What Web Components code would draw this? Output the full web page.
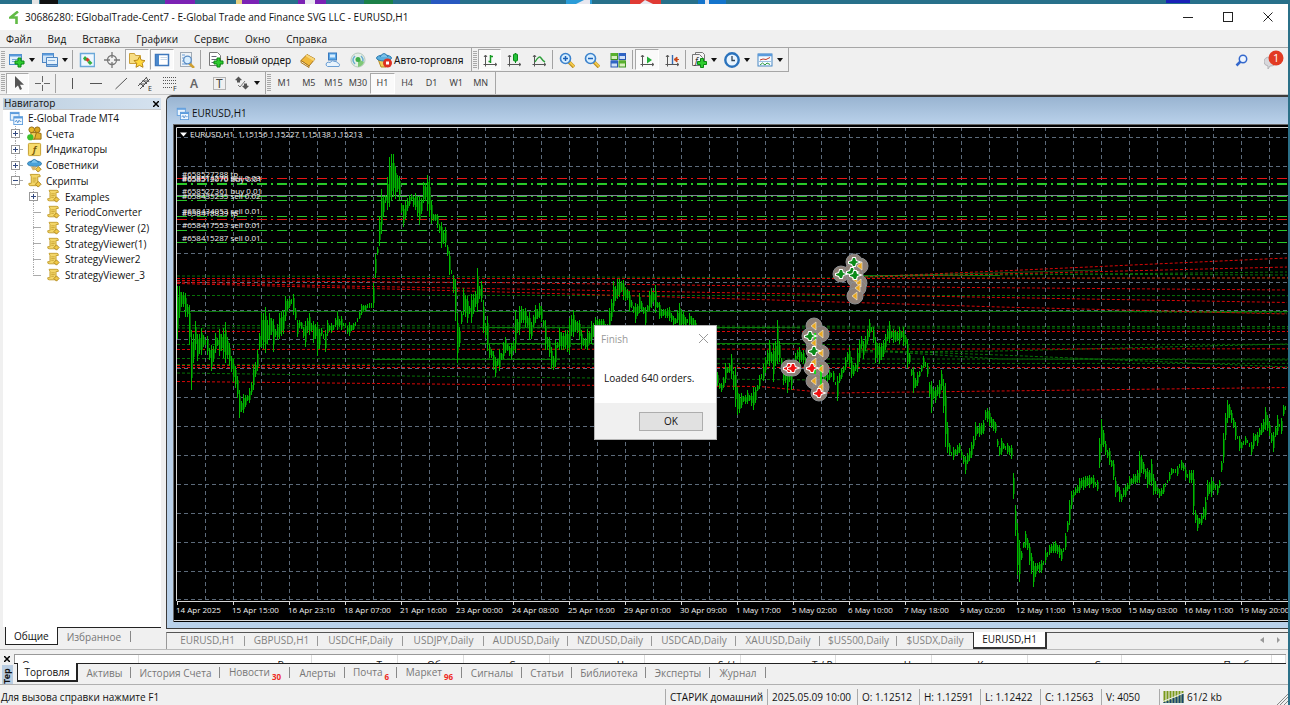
<!DOCTYPE html>
<html lang="ru">
<head>
<meta charset="utf-8">
<title>30686280: EGlobalTrade-Cent7 - EURUSD,H1</title>
<style>
html,body{margin:0;height:100%}
body{background:#2b7088;font:10px/16px "Open Sans","Noto Sans",sans-serif;color:#111;overflow:hidden}
</style>
</head>
<body>
<terminal-app></terminal-app>
<script>
const BASE = `*{box-sizing:border-box}button{font:inherit;color:inherit;background:none;border:0;padding:0;margin:0;cursor:default;white-space:nowrap}svg{display:block;flex:none}`;

function define(name, css, markup, after) {
  customElements.define(name, class extends HTMLElement {
    constructor() {
      super();
      this.attachShadow({mode: 'open'});
    }
    connectedCallback() {
      const html = typeof markup === 'function' ? markup(this) : markup;
      this.shadowRoot.innerHTML = `<style>${BASE}${css}</style>${html}`;
      if (after) after(this);
    }
  });
}

/* ---------- icons, 16x16 ---------- */
const plus = (x, y) => `<path d="M${x+3} ${y}h3v3h3v3h-3v3h-3v-3h-3v-3h3z" fill="#2ecc2e" stroke="#0a8a12"/>`;
const axes = `<path d="M3.5 3.5v11M1.5 12.5h13M2 5l1.500-2L5 5M13 11l2 1.500-2 1.500" fill="none" stroke="#555"/>`;
const scroll = `<path d="M3.5 1.5h9q2 0 1.5 2.5h-2.500v7l1 2.500h-9q-2 0-1.500-2.500h2.500v-7z" fill="#f3d668" stroke="#c19a28"/><path d="M6 5.5h4M6 7.5h4M6 9.5h3" stroke="#c9a436"/><path d="M12 9l3 3-3 3-3-3z" fill="#f0c846" stroke="#a8801c"/>`;
const charts = `<rect x="1.500" y="1.500" width="10" height="9" fill="#e6f2fd" stroke="#5b9bdc"/><path d="M1.500 2.500h10" stroke="#5b9bdc" stroke-width="2"/><rect x="5.500" y="6.500" width="10" height="9" fill="#eef7ff" stroke="#5b9bdc"/><path d="M5.500 7.500h10" stroke="#5b9bdc" stroke-width="2"/><path d="M7 12.500l1.500-2 1.500 3 1.500-3 1.500 2 1-1" fill="none" stroke="#4a88cc"/>`;
const lens = (s) => `<path d="M10 10l5 5" stroke="#b98b1c" stroke-width="3.500"/><path d="M10.500 10l4.500 4.500" stroke="#f3c94a" stroke-width="2"/><circle cx="6.500" cy="6.500" r="5" fill="#d9efff" stroke="#3c82cc" stroke-width="1.600"/><path d="${s}" stroke="#1c62b8" stroke-width="1.500"/>`;
const ICONS = {
  newchart: `<rect x=".5" y="2.5" width="12" height="10" fill="#e2f1fd" stroke="#4d8cc8"/><path d="M.5 3.500h12" stroke="#5b9bdc" stroke-width="2"/><path d="M3 7.500h6M3 9.500h4" stroke="#7aa9d6"/>${plus(6,6)}`,
  profiles: `<rect x=".5" y="1.500" width="11" height="9" fill="#cfe4f8" stroke="#4f86c2"/><path d="M.5 2.500h11" stroke="#5b9bdc" stroke-width="2"/><path d="M4.500 13.500v-8h11v8z" fill="#e4f1fc" stroke="#4f86c2"/><path d="M4.500 12.500h11v2h-11z" fill="#8fb9e4" stroke="#4f86c2"/><path d="M6 8.500h7" stroke="#8ab4de"/>`,
  market: `<rect x="1.500" y="1.500" width="14" height="13" fill="#eef7ff" stroke="#6aa8d8" stroke-width="1.500"/><path d="M6 4l3 3-3 2-2-2.500z" fill="#2fae3a"/><path d="M8.500 5.500l2.500 2.500-2.500 2-2-2z" fill="#d83a28"/><path d="M10.500 8l3 3-2.500 2-2.500-2.500z" fill="#36b040"/>`,
  cross: `<circle cx="8" cy="8" r="4.500" fill="none" stroke="#777" stroke-width="1.300"/><path d="M8 0v6M8 10v6M0 8h6M10 8h6" stroke="#777" stroke-width="1.300"/>`,
  navig: `<path d="M.5 1.500h5l1 2h5v8h-11z" fill="#f7dd84" stroke="#caa03a"/><path d="M10.500 4.500l1.800 3.600 3.700.5-2.700 2.700.7 4-3.500-1.900-3.500 1.900.7-4-2.700-2.700 3.700-.5z" fill="#ffd83c" stroke="#b98718"/>`,
  term: `<rect x="1.500" y="2.500" width="13" height="11" fill="#fff" stroke="#3f78bd" stroke-width="1.500"/><rect x="2" y="3" width="3" height="10" fill="#4a88cc"/><path d="M6.500 5.500h7M6.500 7.500h7" stroke="#c8d8ea"/>`,
  tester: `<rect x="1.500" y=".5" width="11" height="14" fill="#eef2f6" stroke="#a0aab4"/><path d="M3 3h3M3 6h4M3 9h3M3 12h5" stroke="#6aa0d8"/><path d="M10 11l5 5" stroke="#d0a030" stroke-width="2.500"/><circle cx="8.500" cy="8" r="3.800" fill="#d9efff" stroke="#5a8cc4" stroke-width="1.300"/>`,
  order: `<path d="M1.500.5h8l3 3v10h-11z" fill="#fff" stroke="#777"/><path d="M3.500 4.500h5M3.500 7.500h6M3.500 10.500h3" stroke="#667"/>${plus(6,6)}`,
  meta: `<path d="M1 8.500l6-6 8 4.500-6 7z" fill="#f0b93c" stroke="#a8741a"/><path d="M1 8.500l8 5.500v1.500l-8-5z" fill="#fff3d0" stroke="#a8741a"/><path d="M7 2.500l8 4.500-1.500 2-8-5z" fill="#f8d678"/>`,
  cloud: `<rect x="3.500" y="1" width="8" height="7" fill="#5aa8e8" stroke="#3a78bc"/><rect x="5" y="2.500" width="5" height="3" fill="#d4ecff"/><path d="M2.500 14.500q-2.500-1-1-3.500 1.500-1.500 3.500-.5 2-3 5-1 2-.5 2.500 1.500 3 .5 1.500 3.500z" fill="#e8f3fc" stroke="#6a9ed4"/>`,
  signal: `<circle cx="8" cy="8" r="7" fill="#e4efe6" stroke="#b6c8bc"/><path d="M5 4q-4 4 0 8M11 4q4 4 0 8" fill="none" stroke="#6aaed0" stroke-width="1.500"/><path d="M8 7v8q5-1 6-5" fill="#7fc877"/><circle cx="8" cy="7.500" r="2.500" fill="#3fae4a"/>`,
  auto: `<path d="M2 7h11l-3 8h-5z" fill="#f0cc58" stroke="#b98b24"/><ellipse cx="8" cy="6" rx="7.500" ry="3" fill="#5aaede" stroke="#2f7cb0"/><path d="M4 5q4-7 8 0" fill="#79c2ea" stroke="#2f7cb0"/><circle cx="11.500" cy="11" r="4.500" fill="#dc3022"/><rect x="10" y="9.500" width="3" height="3" fill="#fff"/>`,
  bars: `${axes}<path d="M8.500 3v8M8.500 9.500h-2M11 4.500h-3" stroke="#159a22" stroke-width="1.500" fill="none"/>`,
  candle: `${axes}<path d="M9.500 1v10" stroke="#0a8a18"/><rect x="7.500" y="2" width="4" height="7" rx="1" fill="#24c03a" stroke="#0a8a18"/>`,
  line: `${axes}<path d="M4 10q4-7 6-4t4 4" fill="none" stroke="#2fa03c" stroke-width="1.400"/>`,
  zin: lens('M4 6.500h5M6.500 4v5'), zout: lens('M4 6.500h5'),
  tile: `<rect x="1" y="1.500" width="6.500" height="6" fill="#d6eebc" stroke="#3d9122"/><path d="M1 2.500h6.500" stroke="#58b02c" stroke-width="3"/><rect x="9" y="1.500" width="6.500" height="6" fill="#cfe0f8" stroke="#2a58b0"/><path d="M9 2.500h6.500" stroke="#2f64c4" stroke-width="3"/><rect x="1" y="9" width="6.500" height="6" fill="#cfe0f8" stroke="#2a58b0"/><path d="M1 10h6.500" stroke="#2f64c4" stroke-width="3"/><rect x="9" y="9" width="6.500" height="6" fill="#d6eebc" stroke="#3d9122"/><path d="M9 10h6.500" stroke="#58b02c" stroke-width="3"/>`,
  scrollr: `${axes}<path d="M8 4.500l5 3.500-5 3.500z" fill="#24b038"/>`,
  shift: `${axes}<path d="M8.500 3v9" stroke="#346ab4" stroke-width="1.400"/><path d="M15 7.500h-3M13 5l-3 2.500 3 2.500z" fill="#c8481c" stroke="#c8481c"/>`,
  indic: `<path d="M4.500.5h7l2 2v9h-9z" fill="#f4f4f4" stroke="#777"/><path d="M1.500 2.500h7l3 3v8h-10z" fill="#f4f4f4" stroke="#777"/><text x="4" y="12" font-size="9" font-style="italic" fill="#333">f</text>${plus(6.5,6.5)}`,
  clock: `<circle cx="8" cy="8" r="6.700" fill="#e8f4ff" stroke="#2a72bc" stroke-width="2.400"/><path d="M8 4v4.500h3" fill="none" stroke="#345" stroke-width="1.300"/>`,
  templ: `<rect x="1" y="2" width="14" height="12" fill="#f4faff" stroke="#4a88c4"/><path d="M1 3h14" stroke="#5b9bdc" stroke-width="2.500"/><path d="M3 8l3-1 3 .5 4-2" stroke="#c43a2a" fill="none"/><path d="M1 9.500h14" stroke="#9cc0e0"/><path d="M3 13l2.500-2 2.500 2 2-2 3 1.500" stroke="#2c9a3c" fill="none"/>`,
  cursor: `<path d="M5 1v12l3-2.500 2 4.500 2-1-2-4.300h4z" fill="#555"/>`,
  xhair: `<path d="M8.500 1v6M8.500 10v6M1 8.500h6M10 8.500h6" stroke="#666"/>`,
  vline: `<path d="M8.500 3v11" stroke="#555"/>`,
  hline: `<path d="M2 8.500h12" stroke="#555"/>`,
  trend: `<path d="M2.500 14L14 3" stroke="#555"/>`,
  chan: `<path d="M1 11l9-9M3 14l10-10M3 8l4 4M6 5l4 4M9 2l3 5M2 9h6M5 6h6" stroke="#555" fill="none"/><text x="11" y="16" font-size="7" fill="#333">E</text>`,
  fibo: `<path d="M1 2.500h13M1 5.500h13M1 8.500h13M1 12.500h9" stroke="#555" stroke-dasharray="1 1"/><text x="11" y="16" font-size="7" fill="#333">F</text>`,
  texta: `<text x="4" y="13" font-size="12" font-weight="600" fill="#666">A</text>`,
  textt: `<rect x="2.500" y="2.500" width="12" height="12" fill="none" stroke="#777" stroke-dasharray="1 1"/><text x="5" y="13" font-size="12" fill="#444">T</text>`,
  arrows: `<path d="M1 5l3.500-3.500L8 5l-2 .5v2h-3v-2z" fill="#555"/><path d="M8 11l2-.5v-2h3v2l2 .5-3.500 3.500z" fill="#555"/><path d="M4 10l2 2 5-6" stroke="#777" fill="none"/>`,
  charts, scroll,
  people: `<circle cx="5" cy="4" r="3" fill="#e8b82c" stroke="#946c10"/><circle cx="11" cy="4" r="3" fill="#d8a420" stroke="#946c10"/><path d="M7 14v-6q4-2 8 0v6z" fill="#e0b02c" stroke="#946c10"/><path d="M4 7h6l-2 7h-3z" fill="#f0cc5c" stroke="#946c10"/><circle cx="3.500" cy="12" r="3.300" fill="#3cc02c"/>`,
  func: `<rect x="1.500" y="1.500" width="13" height="13" rx="1" fill="#f7dc6c" stroke="#c39c2c"/><text x="6" y="12" font-size="10" font-weight="bold" font-style="italic" fill="#7a5c10">f</text>`,
  hat: `<ellipse cx="8" cy="6" rx="7.500" ry="3" fill="#4aa2da" stroke="#2874a8"/><path d="M4 5q3.500-7 8 0" fill="#7cc4ee" stroke="#2874a8"/><path d="M4 9h6l-2 4h-2z" fill="#d8b46c"/><path d="M12 9l3 3-3 3-3-3z" fill="#f0c846" stroke="#a8801c"/>`,
};
const icon = (n, s = 16) => `<svg width="${s}" height="${s}" viewBox="0 0 16 16" aria-hidden="true">${ICONS[n]}</svg>`;

/* ---------- toolbars ---------- */
define('tool-button', `
:host{display:block;height:21px}
button{display:flex;align-items:center;width:100%;height:100%;padding:0 4px;gap:2px;border:1px solid transparent;font:10px/16px "Noto Sans",sans-serif;color:#111}
:host([plain]) button{justify-content:center;padding:0}
:host([drop]) button{padding:0 2px;gap:4px}
:host([pressed]) button{background:#fafafa;border-color:#a8a8a8 #fff #fff #a8a8a8}
:host([period]) button{font-size:9px;color:#444}
i{border:3px solid transparent;border-top:4px solid #111;border-bottom:0}`,
  (el) => `<button type="button" aria-label="${el.title || el.getAttribute('label') || el.getAttribute('icon')}">${el.hasAttribute('icon') ? icon(el.getAttribute('icon')) : ''}${el.getAttribute('label') || ''}${el.hasAttribute('drop') ? '<i></i>' : ''}</button>`);

define('tool-strip', `
:host{display:flex;align-items:center;border-right:1px solid #a6a6a6;padding:0 2px 0 0;gap:1px}
b{width:4px;height:18px;margin:0 0 0 1px;background:repeating-linear-gradient(#a8a8a8 0 1px,#f0f0f0 1px 2px)}`,
  '<b></b><slot></slot>');
define('tool-sep', ':host{display:block;width:1px;height:19px;margin:0 1px 0 0;background:#a2a2a2}', '');

const btn = (name, w = 24, extra = '') => `<tool-button icon="${name}" style="width:${w}px" ${extra.includes('drop') || extra.includes('label') ? '' : 'plain'} ${extra}></tool-button>`;

define('tool-bars', `
:host{display:block;border-top:1px solid #a6a6a6;background:#f0f0f0}
.row{display:flex;height:24px}
.row tool-strip{border-bottom:1px solid #a6a6a6}
.two{height:23px;border-bottom:1px solid #c4c4c4}
.two tool-strip{border-bottom:0}
.periods{display:grid;grid-template-columns:repeat(9,1fr);width:221px}
.lines{display:flex;justify-content:space-between;width:170px;margin-left:2px}
.end{margin-left:auto;display:flex;align-items:center;gap:16px;padding-right:4px}`,
`<div class="row">
<tool-strip>${btn('newchart',32,'drop')}${btn('profiles',32,'drop')}<tool-sep></tool-sep>${btn('market')}${btn('cross')}${btn('navig',24,'pressed')}${btn('term',24,'pressed')}${btn('tester')}<tool-sep></tool-sep>${btn('order',92,'label="Новый ордер"')}${btn('meta')}${btn('cloud')}${btn('signal')}${btn('auto',98,'label="Авто-торговля"')}</tool-strip>
<tool-strip>${btn('bars',23,'pressed')}${btn('candle')}${btn('line')}<tool-sep></tool-sep>${btn('zin')}${btn('zout')}${btn('tile',26)}<tool-sep></tool-sep>${btn('scrollr',24,'pressed')}${btn('shift')}<tool-sep></tool-sep>${btn('indic',32,'drop')}${btn('clock',32,'drop')}${btn('templ',32,'drop')}</tool-strip>
<div class="end">
<button type="button" aria-label="Поиск"><svg width="13" height="13" viewBox="0 0 13 13"><circle cx="8" cy="5" r="3.700" fill="#eef5ff" stroke="#3468cc" stroke-width="1.500"/><path d="M5.500 7.500L1.500 11.500" stroke="#3468cc" stroke-width="2.500"/></svg></button>
<button type="button" aria-label="Сообщения"><svg width="20" height="20" viewBox="0 0 20 20"><path d="M0 12q0-5 6-5t6 5q0 4-6 4l-2 3v-3q-4-1-4-4z" fill="#d8d8dc" stroke="#b4b4b8"/><circle cx="12" cy="8" r="7.500" fill="#e23a22"/><text x="9" y="12" font-size="11" fill="#fff">1</text></svg></button>
</div></div>
<div class="row two">
<tool-strip>${btn('cursor',23,'pressed')}${btn('xhair')}<tool-sep></tool-sep><div class="lines">${['vline','hline','trend','chan','fibo','texta','textt'].map(n => btn(n, 23)).join('')}</div>${btn('arrows',32,'drop')}</tool-strip>
<tool-strip><div class="periods">${['M1','M5','M15','M30','H1','H4','D1','W1','MN'].map(p => `<tool-button period plain label="${p}" ${p === 'H1' ? 'pressed' : ''}></tool-button>`).join('')}</div></tool-strip>
</div>`);

/* ---------- caption and menu ---------- */
define('title-bar', `
:host{display:block}
.desk{height:4px;background:#27708a;display:block;width:100%}
.bar{display:flex;align-items:center;height:26px;background:#fff;padding-left:9px}
h1{font:10px/16px "Open Sans",sans-serif;margin:0 0 0 6px;color:#111;white-space:nowrap}
.ctl{margin-left:auto;display:flex}
.ctl button{width:40px;height:26px;display:grid;place-items:center}`,
`<svg class="desk" height="4" aria-hidden="true"><path d="M32 0h7v4h-7z" fill="#e4e4e4"/><path d="M40 0h18v4h-18z" fill="#111"/><path d="M165 0h30v4h-30zM242 0h17v4h-17zM298 0h28v4h-28z" fill="#7b22b4"/><path d="M236 0h6v4h-6z" fill="#e4cf80"/><path d="M364 0h29v4h-29z" fill="#1c8048"/><path d="M431 0h29v4h-29z" fill="#2858c0"/><path d="M566 0h26v4h-26z" fill="#2a9cd8"/><path d="M630 0h31v4h-31z" fill="#e03a34"/><path d="M698 0h28v4h-28z" fill="#1474cc"/><path d="M576 4l8-4h6v4zM640 4l5-4 8 4zM305 0h10v4h-10zM705 0h4v4h-4z" fill="#e8e8f0"/><path d="M1166 0h24v3h-24z" fill="#1a22b8"/></svg>
<div class="bar"><svg width="10" height="13" viewBox="0 0 10 13"><path d="M9 .5L1.500 6.500H7.500V13" fill="none" stroke="#62bb46" stroke-width="2.600"/></svg>
<h1>30686280: EGlobalTrade-Cent7 - E-Global Trade and Finance SVG LLC - EURUSD,H1</h1>
<div class="ctl">
<button type="button" aria-label="Свернуть"><svg width="10" height="10"><path d="M0 5.500h10" stroke="#222"/></svg></button>
<button type="button" aria-label="Развернуть"><svg width="10" height="10"><rect x=".5" y=".5" width="9" height="9" fill="none" stroke="#222"/></svg></button>
<button type="button" aria-label="Закрыть"><svg width="10" height="10"><path d="M.5.5l9 9M9.500.5l-9 9" stroke="#222"/></svg></button></div></div>`);

define('menu-bar', `
:host{display:flex;height:17px;background:#f0f0f0;padding-left:6px;gap:16px}
button{line-height:16px}`,
  ['Файл','Вид','Вставка','Графики','Сервис','Окно','Справка'].map(t => `<button type="button">${t}</button>`).join(''));

/* ---------- navigator ---------- */
const box = (open) => `<svg width="9" height="9"><rect x=".5" y=".5" width="8" height="8" fill="#fff" stroke="#999"/><path d="M2 4.500h5${open ? '' : 'M4.500 2v5'}" stroke="#334a80"/></svg>`;
const leaf = (t, more) => `<li class="sub ${more ? 'more' : ''}"><span class="tw">${more ? box() : ''}</span>${icon('scroll', 14)}<span>${t}</span></li>`;
const branch = (t, i, open) => `<li class="top"><span class="tw">${box(open)}</span>${icon(i, 15)}<span>${t}</span></li>`;
define('nav-panel', `
:host{display:flex;flex-direction:column;width:161px;padding:3px 0 4px 3px;background:#f0f0f0}
header{display:flex;justify-content:space-between;align-items:center;height:11px;padding:0 2px 0 1px;background:linear-gradient(90deg,#bccfe0,#d5e2ef);font:10px/11px "Noto Sans",sans-serif;color:#222}
header button{line-height:10px}
main{flex:1;background:#fff;border-top:1px solid #c8c8c8;min-height:0}
ul{list-style:none;margin:0;padding:0;display:grid;grid-auto-rows:minmax(0,1fr);height:173px}
li{display:flex;align-items:center;white-space:nowrap}
.root{padding-left:6px;gap:5px}
.top{padding-left:8px;gap:4px}
.sub{padding-left:26px;gap:5px}
.tw{display:flex;align-items:center;width:12px;height:100%;background:linear-gradient(#aaa,#aaa) 4px 50%/10px 1px no-repeat,repeating-linear-gradient(#aaa 0 1px,#fff 1px 2px) 4px 0/1px 100% no-repeat}
li:last-child .tw{background-size:10px 1px,1px 50%}
footer{display:flex;height:18px;border-top:1px solid #222;margin-left:2px}
footer button{padding:0 9px;color:#777}
footer button[aria-selected=true]{color:#111;background:#fff;border:1px solid #222;border-top:0;margin-top:-1px;padding:0 8px}
footer i{width:1px;height:11px;background:#888;margin-top:3px}`,
`<header><span>Навигатор</span><button type="button" aria-label="Закрыть"><svg width="6" height="6"><path d="M0 0l6 6M6 0l-6 6" stroke="#000" stroke-width="1.500"/></svg></button></header>
<main><ul><li class="root">${icon('charts',14)}<span>E-Global Trade MT4</span></li>
${branch('Счета','people')}${branch('Индикаторы','func')}${branch('Советники','hat')}${branch('Скрипты','scroll',true)}
${leaf('Examples',true)}${['PeriodConverter','StrategyViewer (2)','StrategyViewer(1)','StrategyViewer2','StrategyViewer_3'].map(t => leaf(t)).join('')}</ul></main>
<footer role="tablist"><button role="tab" aria-selected="true" type="button">Общие</button><button role="tab" type="button">Избранное</button><i></i></footer>`);

/* ---------- price chart ---------- */
/* range samples: x, high, low, in thirds of a pixel from each block's origin */
const RANGES = [
 [165,100,'35 560 725 45 538 640 60 580 650 70 590 690 78 690 870 88 650 740 97 710 790 110 680 760 125 705 760 140 740 820 150 700 760 165 685 770 178 655 790 190 720 790 205 780 850 213 785 900 222 870 955 232 880 945 242 885 915 252 865 910 262 800 880 275 760 820 288 640 740 300 620 760 312 640 720 325 660 760 340 640 720 355 630 700 362 570 650 375 600 615 383 575 640 395 660 715 405 660 690 418 670 750 430 635 700 445 665 730 455 670 770 465 640 740 480 690 755 487 655 700 500 670 700 515 635 690 530 650 690 550 665 710 565 670 690 580 645 660 590 605 640 610 610 625 622 605 625 626 490 620 640 380 450 647 265 410 655 290 340 665 240 330 672 170 320 682 150 290 692 210 300 703 230 300 712 320 390 722 300 350 735 280 310 750 280 330 765 290 385 775 240 300 790 220 345 800 320 380 815 340 380 830 370 455 840 380 440 850 440 520 862 520 550 872 540 690 878 690 840 885 640 750 892 560 640 905 590 670 920 580 670 935 500 640 945 550 600'],
 [480,240,'5 120 190 12 160 370 20 220 330 30 310 370 45 350 410 60 320 390 75 290 340 95 310 360 105 210 340 120 195 270 135 205 260 150 220 310 165 195 250 175 185 230 185 200 250 195 240 330 205 280 340 215 330 400 225 300 380 235 260 330 250 280 330 265 240 350 278 210 290 295 230 290 305 280 335 320 270 330 335 240 310 345 230 270 385 240 280 390 150 260 400 120 210 415 115 170 430 120 180 445 150 210 465 190 250 480 150 210 495 200 260 510 140 200 525 135 220 540 200 240 565 195 240 580 230 260 600 180 270 615 230 260 630 215 260 645 240 280 660 270 330 690 340 420 712 400 440 720 415 470 735 370 430 752 340 410 765 380 500 772 450 530 785 460 500 800 450 490 820 440 510 835 410 450 850 370 420 865 300 370 880 310 430 890 230 370 900 330 380 910 380 440 920 370 460 935 380 450 945 340 380 955 320 370'],
 [760,240,'118 320 370 130 330 370 145 350 400 155 300 400 165 290 350 175 300 370 190 370 450 205 390 420 218 390 420 230 410 490 240 390 430 255 350 390 265 310 370 275 360 425 290 330 400 300 260 350 312 300 370 325 235 290 337 250 290 345 290 370 355 310 375 370 300 350 385 240 310 400 270 310 415 260 310 430 260 320 440 290 380 450 350 410 458 380 460 470 400 440 480 370 420 490 345 380 500 365 400 512 420 520 525 440 490 535 430 480 543 390 450 550 420 530 556 430 640 562 570 640 570 620 665 580 620 660 597 610 640 613 650 710 625 630 665 635 600 650 645 545 600 660 550 590 670 540 580 678 460 540 690 520 570 708 550 580 714 610 670'],
 [1000,240,'5 590 640 20 610 640 35 615 660 42 650 960 50 840 1000 58 910 1030 66 900 950 76 870 920 85 900 960 97 960 1050 107 970 1000 125 960 1000 135 930 970 150 910 940 168 900 940 185 930 965 195 880 930 205 790 870 215 745 790 235 715 760 250 710 750 265 705 745 280 705 745 292 720 755 298 570 670 304 530 630 313 600 640 325 620 670 338 650 710 345 710 770 360 750 790 375 735 770 390 700 740 410 700 730 418 625 730 430 670 700 440 690 745 451 640 730 460 710 770 478 750 775 490 730 760 505 700 730 515 680 700 530 680 710 540 650 690 555 680 720 565 690 730 576 690 730 579 690 825 585 810 850 593 830 880 605 820 850 615 770 840 622 710 770 635 710 770 650 735 765 660 690 750 668 590 680 675 520 600 682 475 540 690 500 550 705 545 600 720 600 640 738 585 610 755 610 650 760 570 620 770 580 620 780 550 590 795 500 570 805 540 580 820 580 640 832 520 580 842 540 590 850 490 520 862 480 500']];

function priceBars() {
  const pts = [];
  for (const [ox, oy, s] of RANGES) {
    const n = s.split(' ').map(Number);
    for (let i = 0; i < n.length; i += 3) pts.push([ox + n[i] / 3, oy + n[i+1] / 3, oy + n[i+2] / 3]);
  }
  let seed = 7, bright = '', dim = '', j = 0;
  const rnd = () => (seed = (seed * 16807) % 2147483647) / 2147483647;
  for (let x = 177; x < 1287; x += 2) {
    while (j < pts.length - 2 && pts[j+1][0] < x) j++;
    const a = pts[j], b = pts[j+1];
    const t = Math.min(1, Math.max(0, (x - a[0]) / (b[0] - a[0])));
    let hi = a[1] + (b[1] - a[1]) * t, lo = a[2] + (b[2] - a[2]) * t;
    const near = Math.min(t, 1 - t) * (b[0] - a[0]) < 1 ? 0 : 1;
    const r = (lo - hi) * .42 * near;
    hi = Math.round(hi + rnd() * r); lo = Math.round(Math.max(hi + 3, lo - rnd() * r));
    bright += `M${x}.5 ${hi}V${lo}`;
    const cut = Math.round((lo - hi) * .2);
    if (lo - hi > 5) dim += `M${x+1}.5 ${hi+cut}V${lo-cut}`;
  }
  return `<path d="${dim}" stroke="#006400"/><path d="${bright}" stroke="#00b800"/>`;
}

function chartSvg() {
  let grid = '', ticks = '';
  for (let x = 205; x < 2600; x += 28) grid += `M${x}.5 127V601`;
  for (let i = 0; i < 17; i++) grid += `M177 ${Math.round(137 + i * 28.9)}.5H2600`;
  const labels = ['14 Apr 2025','15 Apr 15:00','16 Apr 23:10','18 Apr 07:00','21 Apr 16:00','23 Apr 00:00','24 Apr 08:00','25 Apr 16:00','29 Apr 01:00','30 Apr 09:00','1 May 17:00','5 May 02:00','6 May 10:00','7 May 18:00','9 May 02:00','12 May 11:00','13 May 19:00','15 May 03:00','16 May 11:00','19 May 20:00'];
  labels.forEach((t, i) => { ticks += `M${177 + i * 56}.5 601v4`; });
  const level = (ys, c) => ys.map(y => `<path d="M177 ${y}.5H2600" stroke="${c}" stroke-dasharray="10 4 2 4"/>`).join('');
  const dash = (list, c) => list.map(d => `<polyline points="${d}" fill="none" stroke="${c}" stroke-dasharray="3 2"/>`).join('');
  const C = (x, y) => `<circle cx="${Math.round(760 + x / 3)}" cy="${Math.round(240 + y / 3)}" r="8" fill="#8f8178" stroke="#8c8f92"/>`;
  const T = (x, y) => `<path d="M${Math.round(757 + x / 3)} ${Math.round(240 + y / 3)}l5-4v8z" fill="#e8a820" stroke="#f4e4c8" stroke-width=".7"/>`;
  const P = (x, y, c) => `<path d="M${Math.round(760 + x / 3) - 1} ${Math.round(240 + y / 3) - 4}h2l1 3 3 1-3 1-1 3h-2l-1-2-3-1v-1l3-1z" fill="${c}" stroke="#fff" stroke-width="2" paint-order="stroke"/>`;
  const tri = [[300,77],[285,118],[297,130],[293,145],[285,168],[163,258],[183,283],[163,308],[182,338],[163,366],[183,388],[163,422],[183,440]];
  const gr = [[282,67],[244,103],[275,97],[286,104],[150,288],[162,332]], rd = [[155,385],[177,458],[86,385],[99,385]];
  const orders = [[177,'#658527288 tp'],[181,'#658514270 sell 0.03'],[182,'#658512070 buy 0.01'],[194,'#658527361 buy 0.01'],[199,'#658435235 sell 0.02'],[214,'#658434053 sell 0.01'],[216,'#658418839 tp'],[228,'#658417553 sell 0.01'],[241,'#658415287 sell 0.01']];
  return `<svg width="100%" height="100%" role="img" aria-label="EURUSD,H1"><g transform="translate(-174,-125)" stroke-width="1">
<path d="${grid}" stroke="#5c6a7a" stroke-dasharray="4 3" fill="none"/>
${level([183,196,200,216,230,242], '#28c828')}${level([184], '#28c828')}${level([178,219], '#e81414')}
<path d="M177 195.5H2600" stroke="#7c8790"/>
${dash(['177,276 600,277 860,278 2600,278','177,295.5 1094,295.5 2600,297','177,325.5 1094,326.5 2600,327','177,328 860,328 2600,329','177,344.5 860,344.5 2600,344','860,350 1000,355 1287,367','860,352 1000,351 1287,344','860,350 1000,359 1287,360','177,358.5 860,359 2600,359','177,364.5 860,363.5 2600,363','177,373 485,377 820,380','860,276 1000,275 1287,272','860,276 1000,274 1287,275','1094,311.5 1287,313'], '#087008')}
<path d="M177 311.5H1290M480 327.5H780M480 343.5H800M374 359.5H560M860 275.5H1000" stroke="#0a7a0a" fill="none"/>
${dash(['177,278.5 485,278.5 860,278.5 2600,276','177,280.5 485,282.5 720,285.5 1287,290','177,282 340,286 600,290.5 1287,302.5','177,283.5 485,291.5 740,299 1000,307 1287,314','860,277 1000,271 1287,258','860,277 1000,274 1287,267','177,331.5 760,331.5 2600,331.5','177,349.5 2600,348','177,367.5 2600,367.5','177,365.5 370,365.5','177,381.5 480,384.5 760,386.5 830,393 1000,391 1287,387.5'], '#d80808')}
${priceBars()}
<path d="M860 276.5L1100 270M800 327.5H776" stroke="#1e8a1e" opacity=".6"/>
${tri.concat(gr, rd).map(p => C(...p)).join('')}
<path d="M815 333v12M815 360v14M821 365v24" stroke="#18d818" stroke-width="2"/>
${tri.map(p => T(...p)).join('')}${gr.map(p => P(...p, '#0a8a18')).join('')}${rd.map(p => P(...p, '#f01010')).join('')}
<path d="M176.5 601V127.5H2600M177 601.5H2600M174 620.5H2600${ticks}" stroke="#d8d8d8" fill="none"/>
<path d="M180 132.5h7l-3.500 4z" fill="#fff"/>
<g font-size="8" fill="#f0f0f0"><text x="190" y="137">EURUSD,H1&#160; 1.15156 1.15227 1.15138 1.15213</text>
${orders.map(([y, t]) => `<text x="182" y="${y}">${t}</text>`).join('')}
${labels.map((t, i) => `<text x="${176 + i * 56}" y="613">${t}</text>`).join('')}</g></g></svg>`;
}
define('price-chart', `
:host{display:block;flex:1;min-height:0;min-width:0;background:#000;overflow:hidden}
svg{font-family:"Open Sans","Noto Sans",sans-serif;overflow:hidden}`, chartSvg);

define('chart-window', `
:host{display:flex;flex-direction:column;flex:1;min-height:0;border:solid #3c3c3c;border-width:2px 0 1px 1px;border-top-left-radius:6px;background:#b9d1ea;padding:0 0 6px 6px;overflow:hidden}
header{display:flex;align-items:center;gap:3px;height:27px;margin-left:-6px;padding:5px 0 0 9px;background:linear-gradient(#99b4d1,#b9d1ea)}
.client{display:flex;flex:1;min-height:0;border:solid #6a6a6a;border-width:1px 0 0 1px}`,
`<header>${icon('charts', 13)}<span>EURUSD,H1</span></header><div class="client"><price-chart></price-chart></div>`);

/* ---------- tab strips ---------- */
const TABS = [['EURUSD,H1',75],['GBPUSD,H1',73],['USDCHF,Daily',85],['USDJPY,Daily',81],['AUDUSD,Daily',84],['NZDUSD,Daily',84],['USDCAD,Daily',84],['XAUUSD,Daily',84],['$US500,Daily',77],['$USDX,Daily',76]];
define('chart-tabs', `
:host{display:flex;height:17px;margin-top:3px;padding-left:3px;border-top:1px solid #555;border-left:1px solid #999;background:#f0f0f0;color:#808080}
button{height:15px;line-height:15px;background:linear-gradient(#999,#999) 100% 3px/1px 10px no-repeat}
button:nth-last-of-type(2){background:none}
button[aria-selected=true]{width:74px;height:17px;margin-top:-1px;background:#fff;color:#111;border:1px solid #333;border-top:0;border-width:0 2px 2px 1px}
.nav{margin-left:auto;padding:4px 8px 0 0}`,
  TABS.map(([t, w]) => `<button type="button" role="tab" style="width:${w}px">${t}</button>`).join('') +
  `<button type="button" role="tab" aria-selected="true">EURUSD,H1</button><svg class="nav" width="28" height="12"><path d="M4 0v6l-4-3zM17 0v6l3-3z" fill="#999"/></svg>`);

const PAGES = [['Активы',53],['История Счета',89],['Новости',70,'30'],['Алерты',55],['Почта',52,'6'],['Маркет',65,'96'],['Сигналы',60],['Статьи',50],['Библиотека',74],['Эксперты',64],['Журнал',56]];
const COLS = [['Ордер',123],['Время',173],['Тип',86],['Объем',66],['Символ',86],['Цена',95],['S / L',96],['T / P',95],['Цена',96],['Комиссия',96],['Своп',94],['Прибыль',150]];
define('term-panel', `
:host{display:flex;height:36px;background:#f0f0f0;border-top:1px solid #bbb;border-bottom:1px solid #b0b0b0;padding-right:2px}
aside{width:14px;display:flex;flex-direction:column;align-items:center;gap:3px;padding-top:6px}
aside span{writing-mode:vertical-rl;transform:rotate(180deg);background:#b9cde2;font:bold 9px/10px "Noto Sans",sans-serif;height:20px;width:11px;overflow:hidden}
section{flex:1;min-width:0;margin-top:4px}
.head{height:9px;overflow:hidden;background:#fff;border:solid #999;border-width:1px 0 0 1px}
table{border-collapse:collapse;table-layout:fixed;width:100%}
th{font-weight:400;text-align:right;padding:3px 2px 0 0;border-right:1px solid #ddd;line-height:14px;white-space:nowrap}
th:first-child{text-align:left;padding-left:7px}
nav{display:flex;height:18px;padding-left:3px;border-top:1px solid #222;color:#777}
button{line-height:16px;height:17px;background:linear-gradient(#888,#888) 100% 3px/1px 11px no-repeat}
button.on{width:61px;margin-top:-1px;height:19px;color:#111;background:#fff;border:solid #222;border-width:0 2px 2px 1px}
sub{font:bold 8px/9px "Open Sans";color:#ee2a24;vertical-align:-4px;margin-left:2px}`,
`<aside><button type="button" aria-label="Закрыть" style="height:6px;background:none"><svg width="6" height="6"><path d="M0 0l6 6M6 0l-6 6" stroke="#000" stroke-width="1.500"/></svg></button><span>Тер</span></aside>
<section><div class="head"><table><thead><tr>${COLS.map(([t, w]) => `<th style="width:${w}px">${t}</th>`).join('')}<th></th></tr></thead></table></div>
<nav role="tablist"><button type="button" role="tab" class="on">Торговля</button>${PAGES.map(([t, w, n]) => `<button type="button" role="tab" style="width:${w}px">${t}${n ? `<sub>${n}</sub>` : ''}</button>`).join('')}</nav></section>`);

define('status-bar', `
:host{display:flex;align-items:center;height:20px;background:#f0f0f0;padding-top:3px;padding-left:1px;overflow:hidden}
span{white-space:nowrap;height:16px;border-left:1px solid #aaa;padding-left:4px;line-height:16px}
.hint{border:0;padding:0;margin-right:auto}
.kb{display:flex;gap:3px;align-items:center;padding-left:3px}`,
`<span class="hint">Для вызова справки нажмите F1</span>
<span style="width:102px">СТАРИК домашний</span><span style="width:90px">2025.05.09 10:00</span><span style="width:62px">O: 1.12512</span><span style="width:61px">H: 1.12591</span><span style="width:60px">L: 1.12422</span><span style="width:61px">C: 1.12563</span><span style="width:58px">V: 4050</span>
<span class="kb" style="width:117px"><svg width="21" height="12"><path d="M1.5 0v12M4.5 0v12M7.5 0v12M10.5 0v12M13.5 0v12M16.5 0v12M19.5 0v12" stroke="#7a9a1c" stroke-width="2"/><path d="M1.5 11v1M4.5 10v2M7.5 8.5v3.500M10.5 7v5M13.5 6v6M16.5 4v8M19.5 3v9" stroke="#17466e" stroke-width="2"/><path d="M0 10.5L21 2" stroke="#f0f0f0"/></svg>61/2 kb</span>
<svg width="12" height="16"><path d="M1 16L12 5M4 16l8-8M8 16l4-4" stroke="#888"/></svg>`);

/* ---------- message box ---------- */
define('message-box', `
:host{position:absolute;left:594px;top:325px;width:123px;height:115px;background:#fff;border:1px solid #b4b4b4;display:flex;flex-direction:column}
header{display:flex;justify-content:space-between;align-items:center;height:25px;padding:0 8px 0 6px;color:#999}
p{flex:1;margin:0;padding:19px 0 0 9px;white-space:nowrap}
footer{height:36px;background:#f0f0f0;display:flex;justify-content:flex-end;align-items:center;padding-right:13px}
footer button{width:64px;height:19px;background:#e1e1e1;border:1px solid #adadad}`,
`<header><span>Finish</span><button type="button" aria-label="Закрыть"><svg width="9" height="9"><path d="M0 0l9 9M9 0l-9 9" stroke="#999"/></svg></button></header>
<p><slot></slot></p><footer><button type="button">OK</button></footer>`);

define('terminal-app', `
:host{display:flex;flex-direction:column;height:100vh;margin-right:2px;background:#f0f0f0}
.work{flex:1;display:flex;min-height:0}
.mdi{flex:1;min-width:0;display:flex;flex-direction:column;margin-left:5px}`,
`<title-bar></title-bar><menu-bar></menu-bar><tool-bars></tool-bars>
<div class="work"><nav-panel></nav-panel><div class="mdi"><chart-window></chart-window><chart-tabs></chart-tabs></div></div>
<term-panel></term-panel><status-bar></status-bar>
<message-box role="dialog" aria-label="Finish">Loaded 640 orders.</message-box>`);
</script>
</body>
</html>
